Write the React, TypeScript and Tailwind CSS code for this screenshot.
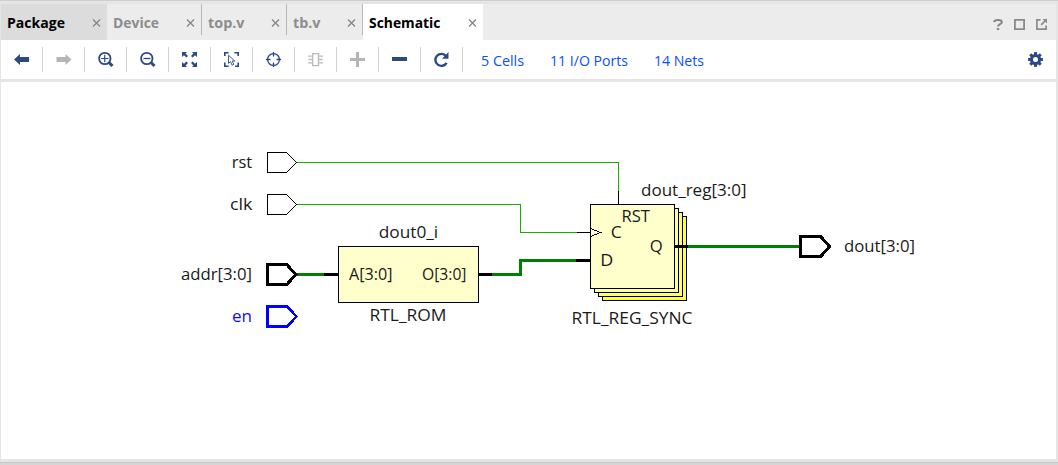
import React from "react";

const NAVY = "#2b4a85";

type TabInfo = { name: string; box: string; width: number };

const tabs: TabInfo[] = [
  { name: "Package", box: "w-[106px] h-9 bg-[#dcdcdc] text-black", width: 58 },
  { name: "Device", box: "w-[95px] h-[31px] border-r border-[#b8b8b8] text-[#8c8c8c]", width: 46 },
  { name: "top.v", box: "w-[85px] h-[31px] border-r border-[#b8b8b8] text-[#8c8c8c]", width: 36.5 },
  { name: "tb.v", box: "w-[76px] h-[31px] border-r border-[#b8b8b8] text-[#8c8c8c]", width: 27.5 },
  { name: "Schematic", box: "w-[120px] h-9 bg-white text-black", width: 71.5 },
];

function FitText({ width, size, bold, children }: { width: number; size: number; bold?: boolean; children: string }) {
  return (
    <svg width={width} height={22} className="block shrink-0 overflow-visible" fill="currentColor">
      <text
        x={0}
        y={16}
        fontSize={size}
        fontWeight={bold ? 700 : 400}
        textLength={width}
        lengthAdjust="spacingAndGlyphs"
        className="font-['Open_Sans',sans-serif]"
      >
        {children}
      </text>
    </svg>
  );
}

function Tab({ tab }: { tab: TabInfo }) {
  return (
    <div className={`flex shrink-0 items-start justify-between pt-2 pr-[6px] pl-1.5 ${tab.box}`}>
      <FitText width={tab.width} size={14.5} bold>
        {tab.name}
      </FitText>
      <svg width="9" height="9" viewBox="0 0 9 9" className="mt-[7px] shrink-0" stroke="#858585" strokeWidth="1.3">
        <path d="M1 .5l7 7M8 .5l-7 7" />
      </svg>
    </div>
  );
}

const icons: React.ReactNode[] = [
  <path fill={NAVY} d="M0 7.5L6 2v3h9v5H6v3z" />,
  <path fill="#b5b5b5" d="M15.5 7.5L9.5 2v3h-9v5h9v3z" />,
  <g fill="none" stroke={NAVY}>
    <circle cx="6.8" cy="6.5" r="5.7" strokeWidth="1.8" />
    <path d="M11 10.5l3.5 3.5" strokeWidth="3" />
    <path d="M3 6.5h7.5M6.75 2.8v7.4" strokeWidth="1.2" />
  </g>,
  <g fill="none" stroke={NAVY}>
    <circle cx="6.8" cy="6.5" r="5.7" strokeWidth="1.8" />
    <path d="M11 10.5l3.5 3.5" strokeWidth="3" />
    <path d="M3.5 6.5h7" strokeWidth="1.3" />
  </g>,
  <g fill={NAVY}>
    <path d="M0 0h5L3.6 1.6 6 4 4.4 5.5 2 3.2 0 5z" />
    <path d="M15 0h-5l1.4 1.6L9 4l1.6 1.5L13 3.2 15 5z" />
    <path d="M0 15h5l-1.4-1.6L6 11 4.4 9.5 2 11.8 0 10z" />
    <path d="M15 15h-5l1.4-1.6L9 11l1.6-1.5 2.4 2.3 2-1.8z" />
  </g>,
  <g fill="none" stroke={NAVY}>
    <path strokeWidth="1.6" d="M.8 4V.8H4.6M10.4 .8h3.8V4M14.2 10.5v3.7H11M4.6 14.2H.8v-3.7" />
    <path strokeWidth=".9" d="M4.5 3.2v8.2l2-1.8 1.6 3.6 1.7-.8-1.6-3.4h2.6z" />
  </g>,
  <g fill="none" stroke={NAVY} strokeWidth="1.3">
    <circle cx="7.5" cy="7.5" r="5.9" />
    <path d="M7.5 0v4.5M7.5 10.5V15M0 7.5h4.5M10.5 7.5H15" />
  </g>,
  <g fill="none" stroke="#bcbcbc" strokeWidth="1.3">
    <path d="M4.7 1.6h5.8v12H4.7z" />
    <path d="M0 4.2h4.5M10.7 4.2H15M.5 7.5h4M10.7 7.5h3.8M0 10.8h4.5M10.7 10.8H15" />
  </g>,
  <path fill="#b5b5b5" d="M6 0h3v6h6v3H9v6H6V9H0V6h6z" />,
  <path fill={NAVY} d="M0 5h15v4H0z" />,
  <g>
    <path fill="none" stroke={NAVY} strokeWidth="2.4" d="M12 4A6 6 0 1 0 12.6 10.8" />
    <path fill={NAVY} d="M14.5 0v6.7H8z" />
  </g>,
];

function Toolbar() {
  return (
    <div className="flex h-[39px] items-center bg-white">
      {icons.map((icon, i) => (
        <div key={i} className="flex h-[25px] w-[42px] shrink-0 items-center justify-center border-r border-[#d2d2d2]">
          <svg width="15" height="15" viewBox="0 0 15 15" className="block overflow-visible">
            {icon}
          </svg>
        </div>
      ))}
      <div className="flex gap-[26px] pt-[3px] pl-[18px] text-[#0a50ff]">
        <FitText width={43} size={14.5}>5 Cells</FitText>
        <FitText width={78} size={14.5}>11 I/O Ports</FitText>
        <FitText width={50} size={14.5}>14 Nets</FitText>
      </div>
      <svg width="15" height="15" viewBox="-7.5 -7.5 15 15" className="mr-[13px] ml-auto block">
        <g fill={NAVY}>
          {[0, 45, 90, 135].map((a) => (
            <rect key={a} x="-1.5" y="-7.4" width="3" height="14.8" transform={`rotate(${a})`} />
          ))}
          <circle r="5.6" />
        </g>
        <circle r="2.5" fill="#fff" />
      </svg>
    </div>
  );
}

type LabelProps = { x: number; y: number; w: number; s?: number; fill?: string; children: string };

function Label({ x, y, w, s = 17, fill = "#1a1a1a", children }: LabelProps) {
  return (
    <text x={x} y={y} fontSize={s} fill={fill} textLength={w} lengthAdjust="spacingAndGlyphs">
      {children}
    </text>
  );
}

function Schematic() {
  return (
    <svg
      width="1055"
      height="377"
      viewBox="1 82 1055 377"
      className="block font-['Open_Sans',sans-serif]"
      fill="none"
      stroke="none"
    >
      <g stroke="#1aab00" shapeRendering="crispEdges">
        <path d="M297 162.5H618.5V191" />
        <path d="M297 204.5H520.5V232.5H577" />
      </g>
      <g stroke="#008000" strokeWidth="3" shapeRendering="crispEdges">
        <path d="M297 274.5H324M492 274.5H520.5V260.5H576M688 246.5H799" />
      </g>
      <g stroke="#000" shapeRendering="crispEdges">
        <path d="M267.5 152.5h19l10 10l-10 10h-19z" />
        <path d="M267.5 194.5h19l10 10l-10 10h-19z" />
        <path d="M618.5 191V204M577 232.5H590" />
        <path fill="#ffffcc" d="M338.5 246.5h140v56h-140z" />
        <path fill="#ffff33" d="M602.5 216.5h84v84h-84z" />
        <path fill="#ffff66" d="M598.5 212.5h84v84h-84z" />
        <path fill="#ffff99" d="M594.5 208.5h84v84h-84z" />
        <path fill="#ffffcc" d="M590.5 204.5h84v84h-84z" />
        <path d="M590.5 228.5l10 4l-10 4" />
        <path strokeWidth="3" d="M324 274.5H338M479 274.5H492M576 260.5H590M675 246.5H688" />
      </g>
      <g stroke="#000" strokeWidth="3" shapeRendering="crispEdges">
        <path d="M267.5 264.5h19.3l9 10l-9 10h-19.3z" />
        <path d="M800.5 236.5h20.2l8.8 10l-8.8 10h-20.2z" />
      </g>
      <path stroke="#0000ff" strokeWidth="2.6" shapeRendering="crispEdges" d="M267.5 306.5h19.5l9.5 10l-9.5 10h-19.5z" />

      <Label x={231.7} y={168} w={20.5}>rst</Label>
      <Label x={230} y={210} w={22.5}>clk</Label>
      <Label x={181} y={280} w={71}>addr[3:0]</Label>
      <Label x={232} y={322} w={20} fill="#1010f0">en</Label>
      <Label x={349} y={280} w={43.5} s={16.5}>A[3:0]</Label>
      <Label x={422} y={280} w={44.5} s={16.5}>O[3:0]</Label>
      <Label x={378.7} y={238} w={59.5}>dout0_i</Label>
      <Label x={369.5} y={321} w={77}>RTL_ROM</Label>
      <Label x={641} y={196} w={105.5}>dout_reg[3:0]</Label>
      <Label x={621.5} y={222} w={28.5} s={16}>RST</Label>
      <Label x={610.7} y={238} w={11} s={16.5}>C</Label>
      <Label x={649.7} y={252} w={13} s={16.5}>Q</Label>
      <Label x={600.3} y={266} w={13} s={16.5}>D</Label>
      <Label x={571.5} y={324} w={121}>RTL_REG_SYNC</Label>
      <Label x={844} y={252} w={71}>dout[3:0]</Label>
    </svg>
  );
}

export default function App() {
  return (
    <div className="flex h-[465px] w-[1058px] flex-col overflow-hidden border-t border-[#cfcfcf] bg-[#e5e5e5] pt-[3px] pr-0.5 pl-px font-['Open_Sans',sans-serif]">
      <div className="flex h-9 shrink-0 bg-[#ececec]">
        {tabs.map((t) => (
          <Tab key={t.name} tab={t} />
        ))}
        <div className="mt-[15px] mr-[9px] ml-auto flex h-3 items-start gap-[11px]">
          <svg width="10" height="11" viewBox="0 0 10 11" className="block" fill="none">
            <path d="M1 3.2C1.3 1.5 3 1 5 1c2.2 0 3.8.7 3.8 2.2C8.8 5.2 5 5 5 7.4" stroke="#858585" strokeWidth="2" />
            <path d="M3.8 9h2.4v2H3.8z" fill="#858585" />
          </svg>
          <svg width="11" height="11" viewBox="0 0 11 11" className="block" fill="none" stroke="#8a8a8a" strokeWidth="1.8">
            <path d="M.9.9h9.2v9.2H.9z" />
          </svg>
          <svg width="11" height="11" viewBox="0 0 11 11" className="block" fill="none" stroke="#8a8a8a" strokeWidth="1.7">
            <path d="M4.5 .9H.9v9.2h9.2V6.5M5.2 5.8L9 2" />
            <path d="M6.5 0H11v4.5z" fill="#8a8a8a" stroke="none" />
          </svg>
        </div>
      </div>
      <Toolbar />
      <div className="mt-[3px] h-[377px] shrink-0 bg-white">
        <Schematic />
      </div>
      <div className="-mr-0.5 -ml-px mt-[3px] h-[3px] shrink-0 border-t border-[#c8c8c8] bg-[#d6d6d6]" />
    </div>
  );
}
